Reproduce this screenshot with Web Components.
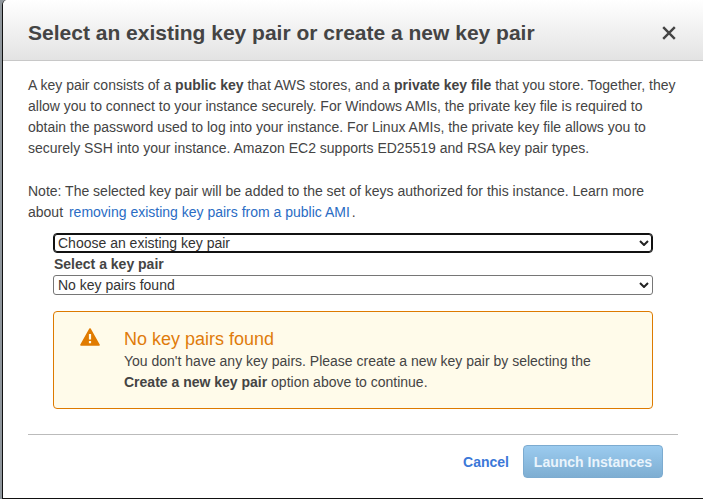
<!DOCTYPE html>
<html lang="en"><head><meta charset="utf-8"><title>Key pair</title>
<style>
html,body{margin:0;height:100%;overflow:hidden;background:#8f969c}
body{font:14px/21px "Liberation Sans",Arial,sans-serif;color:#444}
a{color:#2a6cc4;text-decoration:none;margin-left:2px;margin-right:2px}
</style></head><body>
<key-modal>
  <span slot="title">Select an existing key pair or create a new key pair</span>
  <p>A key pair consists of a <b>public key</b> that AWS stores, and a <b>private key file</b> that you store. Together, they allow you to connect to your instance securely. For Windows AMIs, the private key file is required to obtain the password used to log into your instance. For Linux AMIs, the private key file allows you to securely SSH into your instance. Amazon EC2 supports ED25519 and RSA key pair types.</p>
  <p class="note">Note: The selected key pair will be added to the set of keys authorized for this instance. Learn more about <a href="#">removing existing key pairs from a public AMI</a>.</p>
  <key-form></key-form>
  <warn-box slot="form" heading="No key pairs found">You don't have any key pairs. Please create a new key pair by selecting the<br><b>Create a new key pair</b> option above to continue.</warn-box>
  <modal-actions slot="footer"></modal-actions>
</key-modal>
<script>
function def(name,html){customElements.define(name,class extends HTMLElement{
  constructor(){super();const r=this.attachShadow({mode:'open'});r.innerHTML=typeof html==='function'?html(this):html;}
});}
def('key-modal',`<style>
:host{display:flex;flex-direction:column;box-sizing:border-box;height:499px;margin-left:2px;background:#fff;border-left:1px solid #111;border-bottom:1px solid #111;border-top-left-radius:5px}
header{height:61px;flex:none;display:flex;align-items:center;justify-content:space-between;box-sizing:border-box;padding:6px 26px 0 25px;background:linear-gradient(#fff,#e3e3e3);border-bottom:1px solid #c8c8c8;border-top-left-radius:5px;font:bold 21px/24px "Liberation Sans",Arial,sans-serif;color:#444}
header svg{display:block}
main{flex:1;padding:14px 25px 0;display:flex;flex-direction:column}
::slotted(p){margin:0 0 22px !important;color:#444}
::slotted(p.note){margin:0 0 10px !important}
::slotted(warn-box){margin:16px 25px 0 25px}
footer{border-top:1px solid #bbb;height:64px;flex:none;box-sizing:border-box;margin-top:auto}
</style>
<header><slot name="title"></slot><svg width="16" height="16" viewBox="0 0 16 16"><path d="M2.2 2.2 13.8 13.8M13.8 2.2 2.2 13.8" stroke="#444" stroke-width="2.4" fill="none"/></svg></header>
<main><slot></slot><slot name="form"></slot><footer><slot name="footer"></slot></footer></main>`);
def('select-box',el=>`<style>
:host{display:block;position:relative;height:20px}
select{appearance:none;-webkit-appearance:none;display:block;box-sizing:border-box;width:100%;height:20px;padding:0 20px 0 4px;margin:0;font:14px "Liberation Sans",Arial,sans-serif;color:#333;background:#fff;border:1px solid #767676;border-radius:3px;outline:none}
:host([focused]) select{border:1px solid #111;box-shadow:inset 0 0 0 1px #111;border-radius:4px}
svg{position:absolute;right:4px;top:7px;pointer-events:none}
</style><select aria-label="${el.getAttribute('label')}"><option>${el.getAttribute('value')}</option></select>
<svg width="10" height="6" viewBox="0 0 10 6"><path d="M1 1 5 5 9 1" fill="none" stroke="#222" stroke-width="2"/></svg>`);
def('key-form',`<style>
:host{display:block;padding:0 25px}
label{display:block;font:bold 14px/21px "Liberation Sans",Arial,sans-serif;color:#444;margin-top:1px;height:21px;padding-left:1px}
</style>
<select-box focused label="Key pair action" value="Choose an existing key pair"></select-box>
<label>Select a key pair</label>
<select-box label="Select a key pair" value="No key pairs found"></select-box>`);
def('warn-box',el=>`<style>
:host{display:flex;box-sizing:border-box;height:98px;background:#fffbea;border:1px solid #dd7a00;border-radius:4px;color:#444;font:14px/21px "Liberation Sans",Arial,sans-serif;padding:16px 0 0 26px}
svg{flex:none;display:block;margin-right:24px}
h2{margin:0;font:18px/23px "Liberation Sans",Arial,sans-serif;color:#e07b0c}
</style>
<svg width="20" height="18" viewBox="0 0 20 18"><path d="M10 1 19 17H1Z" fill="#e07b00" stroke="#e07b00" stroke-width="1.6" stroke-linejoin="round"/><path d="M10 6v5.5M10 13v2.2" stroke="#fffbea" stroke-width="2.2"/></svg>
<div><h2>${el.getAttribute('heading')}</h2><slot></slot></div>`);
def('modal-actions',`<style>
:host{display:flex;justify-content:flex-end;align-items:center;gap:14px;padding:10px 15px 0 0}
a{font:bold 14px "Liberation Sans",Arial,sans-serif;color:#3b78d8;text-decoration:none}
button{box-sizing:border-box;width:140px;height:33px;padding:0;border:1px solid #7cabd0;border-radius:4px;background:linear-gradient(#9bcbef,#7eaed2);color:#eaf4fc;font:bold 14px "Liberation Sans",Arial,sans-serif}
</style><a href="#">Cancel</a><button disabled>Launch Instances</button>`);
</script>
</body></html>
